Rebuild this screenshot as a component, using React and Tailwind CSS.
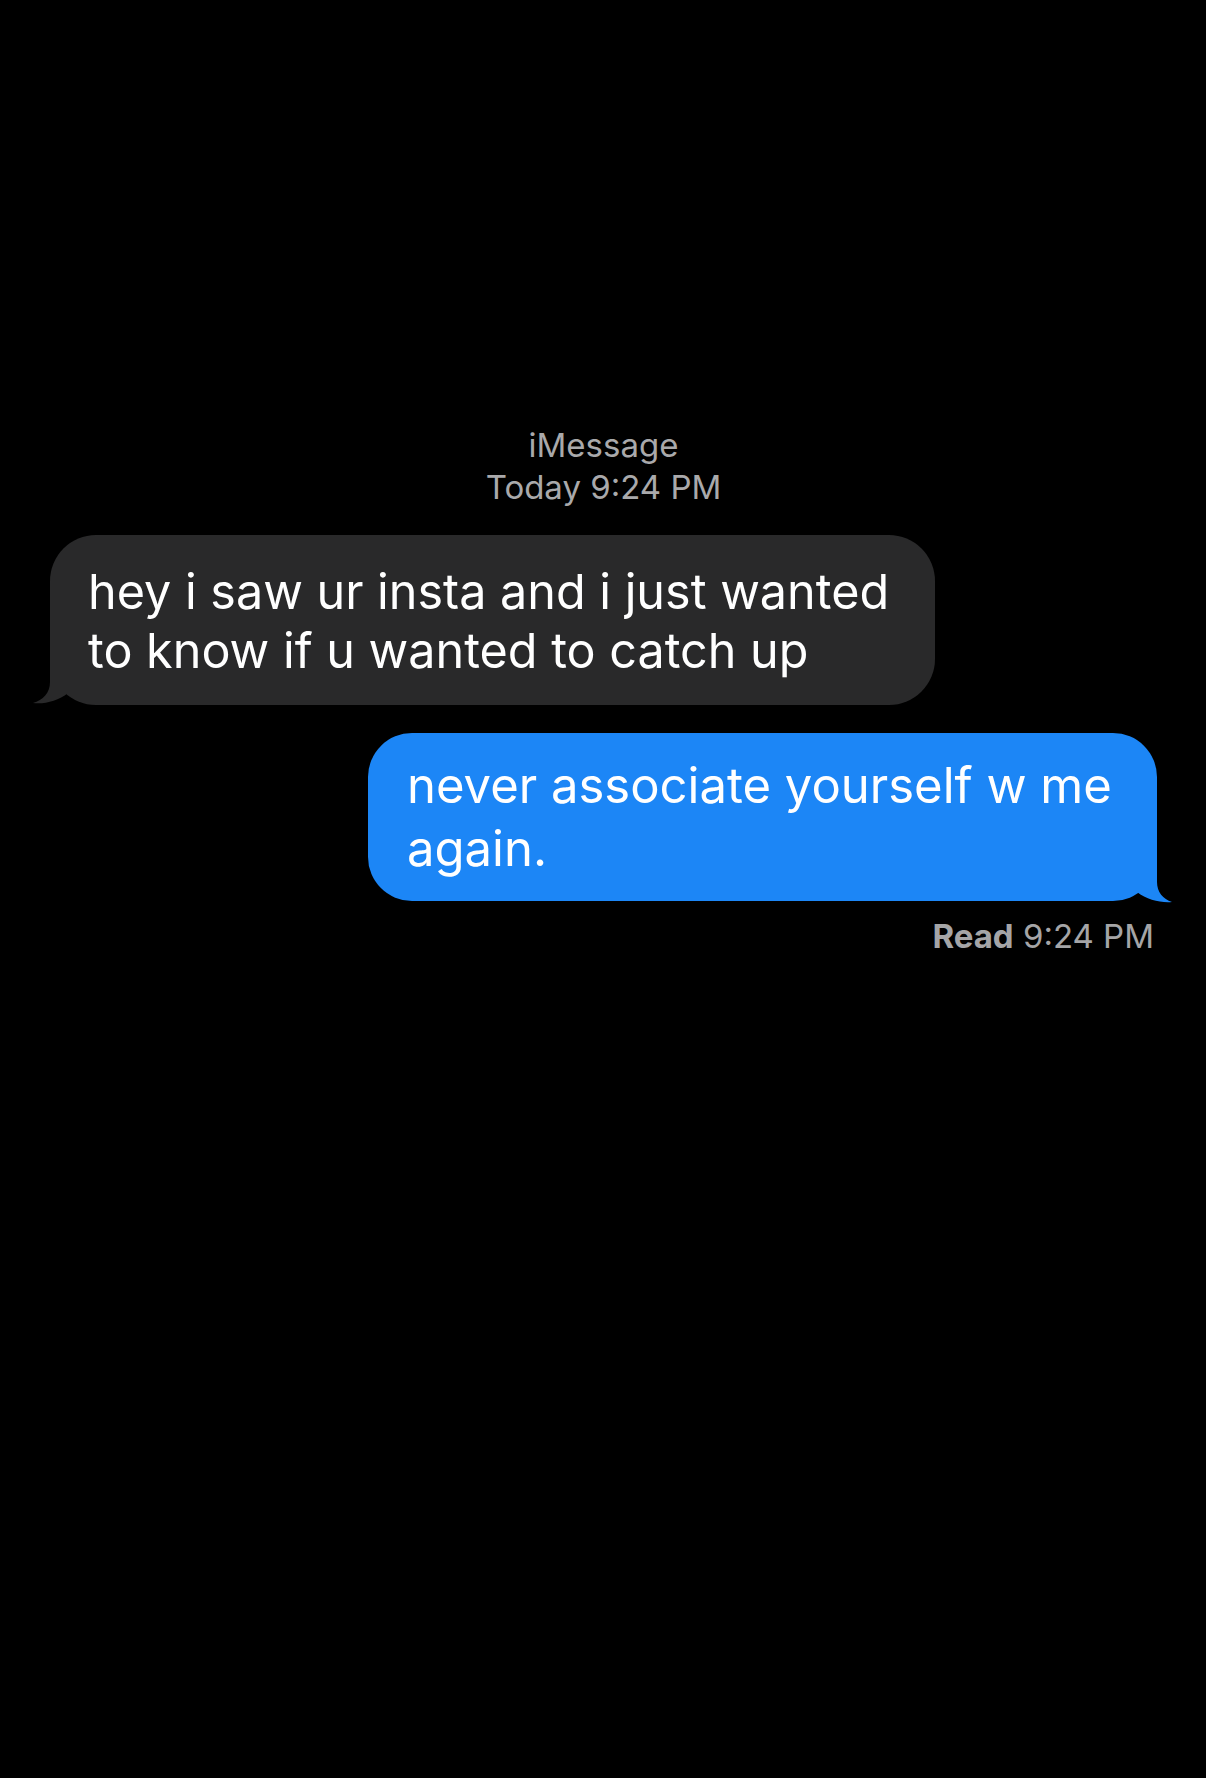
export default function App() {
  const font = { fontFamily: 'Inter, "Liberation Sans", Arial, sans-serif' };
  return (
    <div
      className="w-[1206px] min-h-[1778px] bg-black pt-[424px] pl-[50px] pr-[49px] flex flex-col antialiased"
      style={font}
    >
      {/* conversation header */}
      <div className="text-center text-[33px] leading-[42px] text-[#a9a9ab]">
        <div>iMessage</div>
        <div>Today 9:24 PM</div>
      </div>

      {/* incoming bubble */}
      <div className="relative self-start mt-[27px] w-[885px] bg-[#29292a] rounded-[46px] pl-[38px] pt-[27px] pb-[25px] text-white text-[48.5px] leading-[59px]">
        <div className="whitespace-nowrap">hey i saw ur insta and i just wanted</div>
        <div className="whitespace-nowrap">to know if u wanted to catch up</div>
        <svg
          className="absolute left-[-19px] bottom-0"
          width="40"
          height="47"
          viewBox="0 0 40 47"
        >
          <path
            d="M19 0 L19 24 C19 35 12 42 2 45 C13 46.5 27 43 37 35 L37 0 Z"
            fill="#29292a"
          />
        </svg>
      </div>

      {/* outgoing bubble */}
      <div className="relative self-end mt-[28px] w-[789px] bg-[#1c86f6] rounded-[44px] pl-[39px] pt-[21px] pb-[21px] text-white text-[49px] leading-[63px]">
        <div className="whitespace-nowrap">never associate yourself w me</div>
        <div className="whitespace-nowrap">again.</div>
        <svg
          className="absolute right-[-18px] bottom-[-2px]"
          width="40"
          height="47"
          viewBox="0 0 40 47"
        >
          <path
            d="M22 0 L22 26 C22 36 28 43 37 46 C26 47 12 44 2 36 L2 0 Z"
            fill="#1c86f6"
          />
        </svg>
      </div>

      {/* delivery status */}
      <div className="self-end mt-[15px] pr-[3px] text-[33px] leading-[40px] text-[#a5a5a7]">
        <span className="font-bold">Read</span> 9:24 PM
      </div>
    </div>
  );
}
